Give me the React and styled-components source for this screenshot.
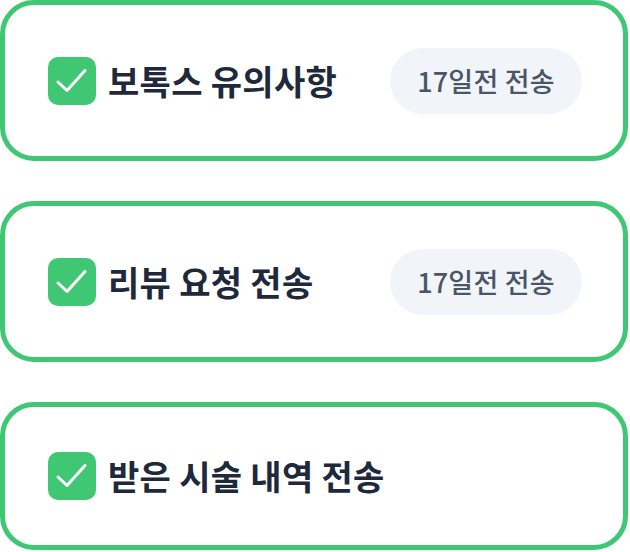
import styled, { createGlobalStyle } from "styled-components";

const GlobalStyle = createGlobalStyle`
  body {
    margin: 0;
    background: #ffffff;
    font-family: "Noto Sans CJK KR", "Noto Sans", sans-serif;
  }
`;

const List = styled.div`
  display: flex;
  flex-direction: column;
  gap: 40px;
  width: 628px;
`;

const Card = styled.div`
  display: flex;
  align-items: center;
  justify-content: space-between;
  box-sizing: border-box;
  height: ${({ $compact }) => ($compact ? "148px" : "161px")};
  padding: 0 41px 0 43px;
  border: 5px solid #3fc774;
  border-radius: 34px;
  background: #ffffff;
`;

const Label = styled.div`
  display: flex;
  align-items: center;
  gap: 12px;
`;

const CheckBox = styled.span`
  display: flex;
  width: 48px;
  height: 48px;
  border-radius: 10px;
  background: #3fc774;
`;

const Title = styled.span`
  font-size: 34px;
  font-weight: 600;
  color: #1e293b;
  letter-spacing: 0.3px;
  line-height: 1;
`;

const Badge = styled.span`
  display: flex;
  align-items: center;
  justify-content: center;
  width: 192px;
  height: 66px;
  border-radius: 33px;
  background: #f1f5f9;
  font-size: 27px;
  font-weight: 500;
  color: #4a5568;
  letter-spacing: 0.2px;
  line-height: 1;
`;

const Check = () => (
  <svg width="48" height="48" viewBox="0 0 48 48" fill="none">
    <path
      d="M10 25 L19 33.5 L37 13.5"
      stroke="#ffffff"
      strokeWidth="3"
      strokeLinecap="round"
      strokeLinejoin="round"
    />
  </svg>
);

const items = [
  { title: "보톡스 유의사항", sent: "17일전 전송" },
  { title: "리뷰 요청 전송", sent: "17일전 전송" },
  { title: "받은 시술 내역 전송" },
];

export default function App() {
  return (
    <>
      <GlobalStyle />
      <List>
        {items.map((item) => (
          <Card key={item.title} $compact={!item.sent}>
            <Label>
              <CheckBox>
                <Check />
              </CheckBox>
              <Title>{item.title}</Title>
            </Label>
            {item.sent && <Badge>{item.sent}</Badge>}
          </Card>
        ))}
      </List>
    </>
  );
}
